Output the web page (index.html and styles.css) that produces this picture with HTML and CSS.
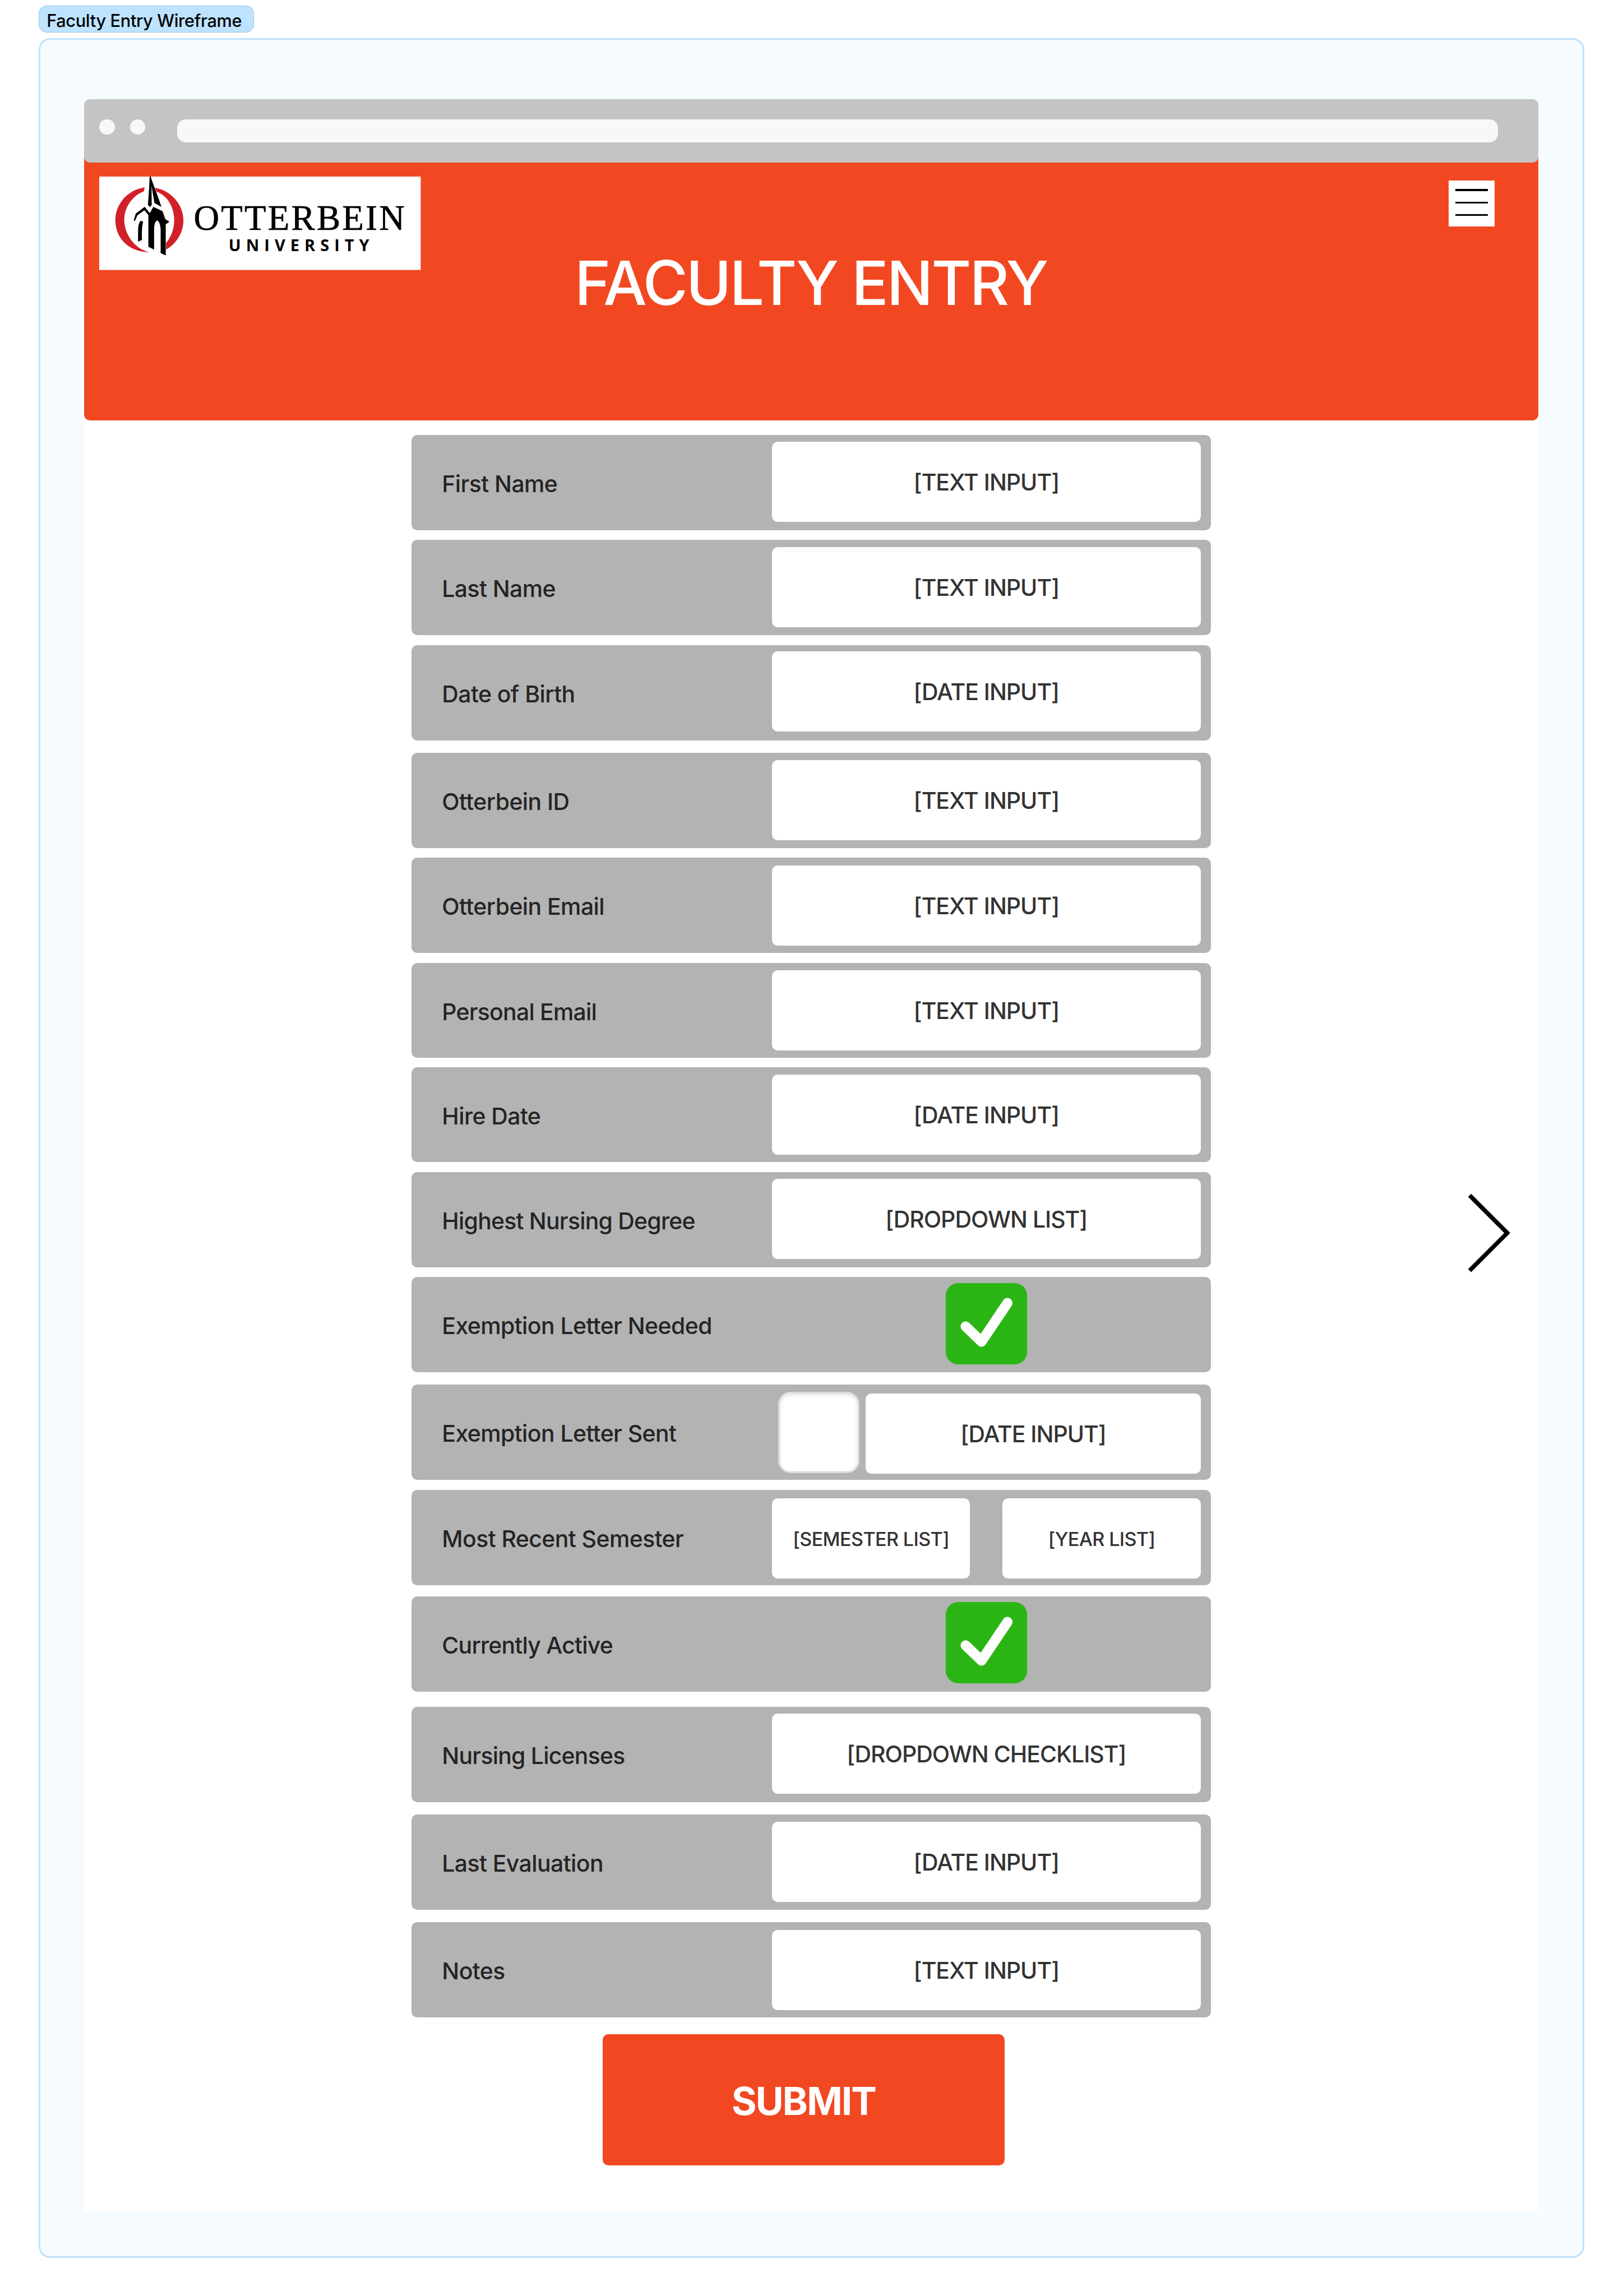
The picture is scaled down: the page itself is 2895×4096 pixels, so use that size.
FILE: index.html
```html
<!DOCTYPE html>
<html lang="en">
<head>
<meta charset="utf-8">
<title>Faculty Entry Wireframe</title>
<link rel="stylesheet" href="styles.css">
</head>
<body>
<svg class="defs" aria-hidden="true">
  <symbol id="check" viewBox="0 0 170 170">
    <rect width="170" height="170" rx="26" fill="#2bb514"/>
    <path d="M41.5 90.5 74.7 122.5 129 41.5" fill="none" stroke="#fff" stroke-width="21" stroke-linecap="round" stroke-linejoin="round"/>
  </symbol>
</svg>
<div class="tab">Faculty Entry Wireframe</div>
<section class="frame">
  <div class="window">
    <div class="bar">
      <span class="dot"></span>
      <span class="dot"></span>
      <span class="url"></span>
    </div>
    <header class="header">
      <svg class="logo" viewBox="0 0 672 195.3" role="img" aria-label="Otterbein University">
        <rect width="672" height="195.3" fill="#fff"/>
        <g transform="translate(22 -10) scale(.33333)">
          <path fill="#d22028" d="M219 98C110 112 35 205 35 303C35 410 112 502 250 505C170 490 91 405 91 300C91 225 140 150 214 122Z"/>
          <path fill="#d22028" d="M284 100C385 118 462 205 462 305C462 380 418 452 353 488L353 447C383 410 404 362 404 303C404 225 365 150 292 124Z"/>
          <path d="M250 30L257 30C268 72 294 124 324 220L280 196L262 88L263 208L252 222L239 207C244 150 248 90 250 30Z"/>
          <path d="M219 220L251 259L273 220L331 247L348 296L373 312L366 321L351 327L351 525L319 510L319 362C318 330 307 306 297 306C286 308 278 330 278 362L278 488L242 470L242 272L217 241L174 273L158 308L150 306L163 262Z"/>
          <path d="M193 307L210 314C202 340 201 360 202 427L177 438L178 350C180 332 186 318 193 307Z"/>
        </g>
        <text class="logo-name" x="197.5" y="111.7" textLength="441">OTTERBEIN</text>
        <text class="logo-sub" x="270.5" y="155.7" textLength="294">UNIVERSITY</text>
      </svg>
      <h1 class="title">FACULTY ENTRY</h1>
      <button class="menu" aria-label="Menu"><i></i><i></i><i></i></button>
    </header>
    <main class="content">
      <form class="form">
        <div class="row"><label>First Name</label><div class="field">[TEXT INPUT]</div></div>
        <div class="row"><label>Last Name</label><div class="field">[TEXT INPUT]</div></div>
        <div class="row"><label>Date of Birth</label><div class="field">[DATE INPUT]</div></div>
        <div class="row"><label>Otterbein ID</label><div class="field">[TEXT INPUT]</div></div>
        <div class="row"><label>Otterbein Email</label><div class="field">[TEXT INPUT]</div></div>
        <div class="row"><label class="snug">Personal Email</label><div class="field">[TEXT INPUT]</div></div>
        <div class="row"><label>Hire Date</label><div class="field">[DATE INPUT]</div></div>
        <div class="row"><label class="snug">Highest Nursing Degree</label><div class="field">[DROPDOWN LIST]</div></div>
        <div class="row"><label>Exemption Letter Needed</label><svg class="check"><use href="#check"/></svg></div>
        <div class="row sent"><label>Exemption Letter Sent</label><span class="box"></span><div class="field">[DATE INPUT]</div></div>
        <div class="row split"><label>Most Recent Semester</label><div class="field">[SEMESTER LIST]</div><div class="field">[YEAR LIST]</div></div>
        <div class="row"><label class="snug">Currently Active</label><svg class="check"><use href="#check"/></svg></div>
        <div class="row"><label class="snug">Nursing Licenses</label><div class="field">[DROPDOWN CHECKLIST]</div></div>
        <div class="row"><label>Last Evaluation</label><div class="field">[DATE INPUT]</div></div>
        <div class="row"><label>Notes</label><div class="field">[TEXT INPUT]</div></div>
        <button class="submit" type="button">SUBMIT</button>
      </form>
      <svg class="next" viewBox="0 0 90 168" aria-label="Next"><path d="M5.2 5.2 83.9 83.9 5.2 162.6" fill="none" stroke="#000" stroke-width="9"/></svg>
    </main>
  </div>
</section>
</body>
</html>
```
FILE: styles.css
```css
/* 1rem = 10 design units */
html {
  font-size: 8.53333px;
  background: #fff;
}

* {
  box-sizing: border-box;
}

body {
  margin: 0;
  height: 480rem;
  padding: 1.2rem 8.03rem 0;
  overflow: hidden;
  font-family: Inter, "Liberation Sans", sans-serif;
  font-weight: 500;
  color: #333;
}

button {
  border: 0;
  padding: 0;
  font: inherit;
}

.defs {
  display: block;
  width: 0;
  height: 0;
}

.tab {
  width: 45.1rem;
  height: 5.6rem;
  padding-left: 1.6rem;
  border: 0.2rem solid #9fc3dc;
  border-radius: 1.6rem;
  background: #bde3ff;
  color: #000;
  font-size: 3.6rem;
  letter-spacing: -0.011em;
  line-height: 6.1rem;
  white-space: nowrap;
}

.frame {
  width: 323.2rem;
  height: 464rem;
  margin-top: 1.2rem;
  padding: 12.4rem 9.2rem 0;
  border: 0.4rem solid #bde3ff;
  border-radius: 2.4rem;
  background: #f5fbff;
}

.window {
  width: 304rem;
  height: 441.6rem;
  background: #fff;
  border-radius: 1.2rem 1.2rem 0 0;
}

.bar {
  position: relative;
  z-index: 1;
  display: flex;
  align-items: flex-start;
  gap: 3.2rem;
  height: 13.2rem;
  padding: 4.2rem 0 0 3.2rem;
  border-radius: 1.2rem;
  background: #c4c4c4;
}

.dot {
  width: 3.2rem;
  height: 3.2rem;
  border-radius: 50%;
  background: #f8f8f8;
}

.url {
  width: 276.2rem;
  height: 4.8rem;
  margin-left: 3.4rem;
  border-radius: 1.8rem;
  background: #f8f8f8;
}

.header {
  display: grid;
  grid-template-columns: 1fr auto 1fr;
  align-items: start;
  height: 55.2rem;
  margin-top: -1.2rem;
  padding: 4.2rem 3.2rem 0;
  border-radius: 0 0 1.2rem 1.2rem;
  background: #f24822;
}

.logo {
  display: block;
  width: 67.2rem;
  height: 19.53rem;
}

.logo-name {
  font: 74px "Liberation Serif", serif;
  stroke: #000;
  stroke-width: 0.8;
}

.logo-sub {
  font: 700 34px "Open Sans", sans-serif;
}

.title {
  margin: 14.5rem 0.2rem 0 0;
  color: #fff;
  font-size: 12.8rem;
  font-weight: 500;
  letter-spacing: -0.028em;
  line-height: 15.4rem;
}

.menu {
  display: flex;
  flex-direction: column;
  justify-self: end;
  align-items: center;
  gap: 2.2rem;
  width: 9.6rem;
  height: 9.6rem;
  margin: 0.8rem 6rem 0 0;
  padding-top: 1.8rem;
  background: #fff;
}

.menu i {
  width: 6.8rem;
  height: 0.4rem;
  background: #000;
}

.content {
  display: grid;
  grid-template-columns: 68.4rem 167.2rem 1fr;
  align-items: start;
  padding-top: 3rem;
}

.form {
  grid-column: 2;
}

.row {
  --gap: 2.06rem;
  --inset: 1.6rem;
  display: flex;
  align-items: flex-start;
  height: 19.9rem;
  margin-top: var(--gap);
  padding: var(--inset) 2.2rem 0 6.4rem;
  border-radius: 1.2rem;
  background: #b3b3b3;
}

.row label {
  width: 69rem;
  height: 19.9rem;
  margin-top: calc(-1 * var(--inset));
  color: #242424;
  font-size: 4.8rem;
  letter-spacing: -0.014em;
  line-height: 20.4rem;
  white-space: nowrap;
}

.row .snug {
  letter-spacing: -0.019em;
}

.row:nth-child(1) { --gap: 0; --inset: 1.4rem; }
.row:nth-child(2) { --inset: 1.44rem; }
.row:nth-child(3) { --inset: 1.27rem; }
.row:nth-child(4) { --gap: 2.6rem; --inset: 1.58rem; }
.row:nth-child(7) { --gap: 1.9rem; }
.row:nth-child(8) { --inset: 1.44rem; }
.row:nth-child(9) { --inset: 1.2rem; }
.row:nth-child(10) { --gap: 2.6rem; --inset: 1.8rem; }
.row:nth-child(11) { --inset: 1.8rem; }
.row:nth-child(12) { --gap: 2.4rem; --inset: 1.2rem; }
.row:nth-child(13) { --gap: 3.2rem; --inset: 1.4rem; }
.row:nth-child(14) { --gap: 2.6rem; --inset: 1.5rem; }
.row:nth-child(15) { --gap: 2.6rem; }

.field {
  flex: 1;
  height: 16.76rem;
  border-radius: 1.2rem;
  background: #fff;
  font-size: 4.8rem;
  letter-spacing: -0.0245em;
  line-height: 17.05rem;
  text-align: center;
  white-space: nowrap;
}

.check {
  width: 17rem;
  height: 17rem;
  margin-left: 36.3rem;
}

.box {
  width: 17rem;
  height: 17rem;
  margin: -0.3rem 1.3rem 0 1.3rem;
  border: 0.45rem solid #dcdcdc;
  border-radius: 2.6rem;
  background: #fff;
  box-shadow: inset 0 0.3rem 0.9rem rgba(0, 0, 0, 0.12);
}

.split .field {
  flex: 0 0 41.4rem;
  font-size: 4rem;
  letter-spacing: -0.019em;
}

.split .field + .field {
  margin-left: auto;
}

.submit {
  display: block;
  width: 84rem;
  height: 27.4rem;
  margin: 3.5rem 0 0 40rem;
  padding-top: 0.5rem;
  border-radius: 1.2rem;
  background: #f24822;
  color: #fff;
  font-size: 8rem;
  font-weight: 700;
  letter-spacing: -0.027em;
}

.next {
  width: 9rem;
  height: 16.8rem;
  margin: 158.38rem 0 0 53.46rem;
}
```
